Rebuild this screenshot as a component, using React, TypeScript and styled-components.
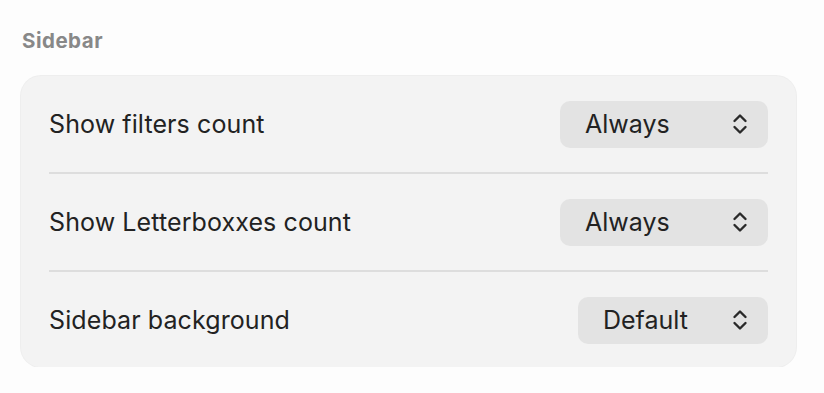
import styled, { createGlobalStyle } from 'styled-components'

const GlobalStyle = createGlobalStyle`
    html, body {
        margin: 0;
        padding: 0;
        background: #fdfdfd;
        font-family: Inter, "Noto Sans", "Liberation Sans", sans-serif;
        -webkit-font-smoothing: antialiased;
    }
`

const Page = styled.div({
    padding: '28px 28px 0 21px',
    width: '824px',
    boxSizing: 'border-box',
})

const SectionTitle = styled.h2({
    margin: '0 0 22px 1px',
    fontSize: '20.5px',
    fontWeight: 700,
    lineHeight: '26px',
    letterSpacing: '0.5px',
    color: '#888888',
})

const Card = styled.div({
    background: '#f3f3f3',
    borderRadius: '20px',
    padding: '0 28px',
    boxShadow: '0 0 0 1px #eeeeee',
})

const Row = styled.div<{ $divider?: boolean }>(({ $divider }) => ({
    display: 'flex',
    alignItems: 'center',
    justifyContent: 'space-between',
    height: '96px',
    borderTop: $divider ? '2px solid #dddddd' : 'none',
    '&:last-child': {
        height: '94px',
        paddingTop: '1px',
    },
}))

const Label = styled.span({
    fontSize: '25px',
    color: '#222222',
    letterSpacing: '0.1px',
})

const PopupButton = styled.button<{ $width: number }>(({ $width }) => ({
    display: 'flex',
    alignItems: 'center',
    justifyContent: 'space-between',
    width: `${$width}px`,
    height: '47px',
    padding: '0 20px 0 25px',
    boxSizing: 'border-box',
    border: 'none',
    borderRadius: '10px',
    background: '#e3e3e3',
    fontFamily: 'inherit',
    fontSize: '25px',
    color: '#222222',
    cursor: 'pointer',
}))

const Chevrons = () => (
    <svg width="16" height="24" viewBox="0 0 16 24" fill="none">
        <path d="M2.5 9 L8 3.5 L13.5 9" stroke="#2a2a2a" strokeWidth="2.4" strokeLinecap="round" strokeLinejoin="round" />
        <path d="M2.5 15 L8 20.5 L13.5 15" stroke="#2a2a2a" strokeWidth="2.4" strokeLinecap="round" strokeLinejoin="round" />
    </svg>
)

const settings = [
    { label: 'Show filters count', value: 'Always', width: 208 },
    { label: 'Show Letterboxxes count', value: 'Always', width: 208 },
    { label: 'Sidebar background', value: 'Default', width: 190 },
]

const App = () => {
    return (
        <>
            <GlobalStyle />
            <Page>
                <SectionTitle>Sidebar</SectionTitle>
                <Card>
                    {settings.map((s, i) => (
                        <Row key={s.label} $divider={i > 0}>
                            <Label>{s.label}</Label>
                            <PopupButton $width={s.width}>
                                <span>{s.value}</span>
                                <Chevrons />
                            </PopupButton>
                        </Row>
                    ))}
                </Card>
            </Page>
        </>
    )
}

export default App
